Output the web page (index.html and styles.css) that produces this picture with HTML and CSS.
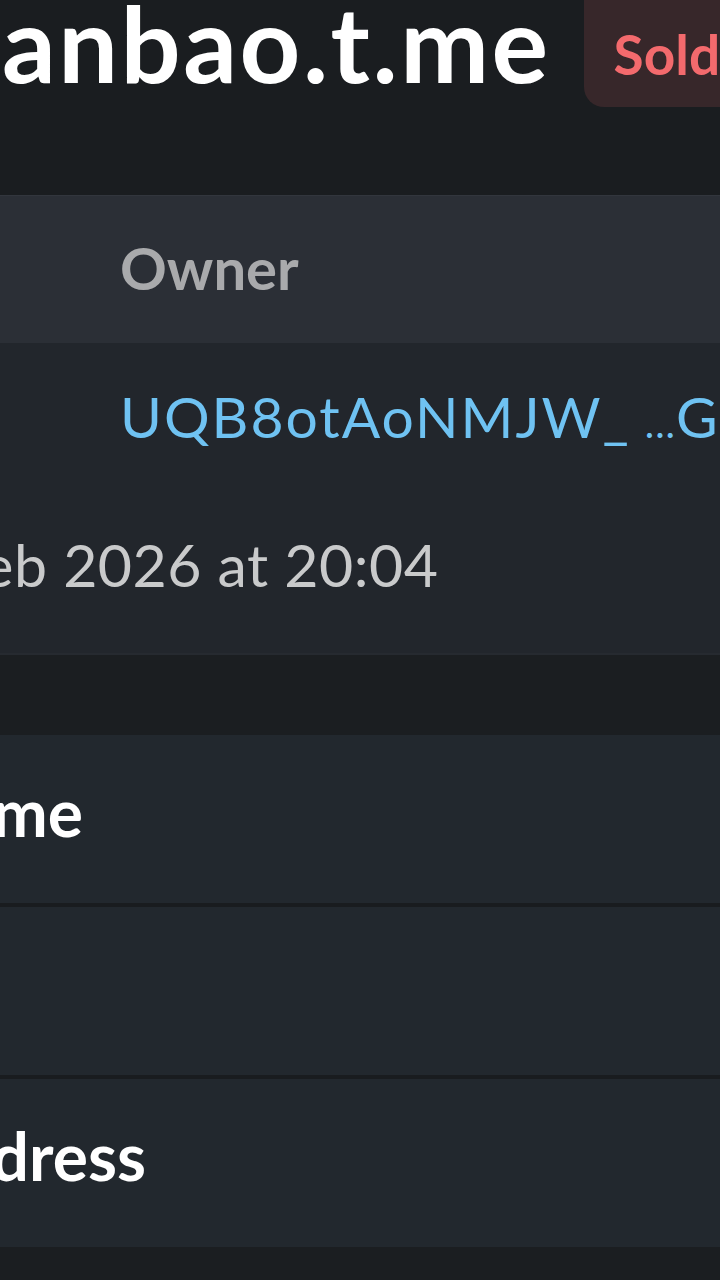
FILE: index.html
```html
<!DOCTYPE html>
<html lang="en">
<head>
    <meta charset="UTF-8">
    <meta name="viewport" content="width=device-width, initial-scale=1.0">
    <title>anbao.t.me - Username</title>
    <link rel="stylesheet" href="styles.css">
</head>
<body>
    <div class="page">
        <div class="item-head">
            <h1 class="item-name">anbao.t.me</h1>
            <span class="item-status">Sold</span>
        </div>

        <div class="owner-table">
            <div class="owner-head">
                <div class="owner-col">Owner</div>
            </div>
            <div class="owner-row">
                <div class="owner-addr">
                    <a href="#">UQB8otAoNMJW_<span class="addr-dots">...</span>Gk4r</a>
                </div>
                <div class="owner-date">14 Feb 2026 at 20:04</div>
            </div>
        </div>

        <div class="info-list">
            <div class="info-row"><span class="info-label">Telegram Username</span></div>
            <div class="info-row"><span class="info-label">Web Address</span></div>
            <div class="info-row"><span class="info-label">TON Web 3.0 Address</span></div>
        </div>
    </div>
</body>
</html>
```

FILE: styles.css
```css
body {
    margin: 0;
    padding: 0;
    background-color: #1b1e21;
    font-family: 'Lato', 'Noto Sans', sans-serif;
    overflow: hidden;
}
.page {
    width: 720px;
    height: 1280px;
    overflow: hidden;
}
.item-head {
    display: flex;
    align-items: flex-start;
    gap: 33px;
    height: 195px;
    background-color: #1a1d20;
    white-space: nowrap;
}
.item-name {
    margin: -11px 0 0 2px;
    color: #ffffff;
    font-size: 106px;
    font-weight: 700;
    line-height: 1;
    letter-spacing: 2.5px;
}
.item-status {
    flex-shrink: 0;
    margin-top: -20px;
    padding: 47px 40px 25px 30px;
    background-color: #37272a;
    border-radius: 20px;
    color: #f36a6d;
    font-size: 55px;
    font-weight: 700;
    line-height: 1;
}
.owner-table {
    margin-left: -200px;
    width: 1120px;
    white-space: nowrap;
}
.owner-head {
    height: 148px;
    padding-left: 320px;
    box-sizing: border-box;
    background-color: #2b2f36;
    border-top: 1px solid #32363d;
}
.owner-col {
    padding-top: 43px;
    color: #a9aaac;
    font-size: 58px;
    font-weight: 700;
    line-height: 1;
}
.owner-row {
    height: 312px;
    box-sizing: border-box;
    padding-top: 45px;
    background-color: #22262c;
    border-bottom: 2px solid #262a30;
}
.owner-addr {
    padding-left: 320px;
    font-size: 57px;
    line-height: 1;
}
.owner-addr a {
    color: #6fc2f2;
    text-decoration: none;
    letter-spacing: 2px;
}
.addr-dots {
    margin-left: 14px;
    font-size: 40px;
    letter-spacing: 1px;
}
.owner-date {
    margin-top: 90px;
    padding-left: 66px;
    color: #c9cacb;
    font-size: 59px;
    line-height: 1;
    letter-spacing: 0.5px;
}
.info-list {
    display: flex;
    flex-direction: column;
    gap: 4px;
    margin-top: 80px;
    background-color: #191c1f;
}
.info-row {
    height: 168px;
    box-sizing: border-box;
    padding-top: 44px;
    background-color: #22282e;
    white-space: nowrap;
}
.info-label {
    display: inline-block;
    margin-left: -491px;
    color: #ffffff;
    font-size: 66px;
    font-weight: 700;
    line-height: 1;
    word-spacing: -6px;
}
```
